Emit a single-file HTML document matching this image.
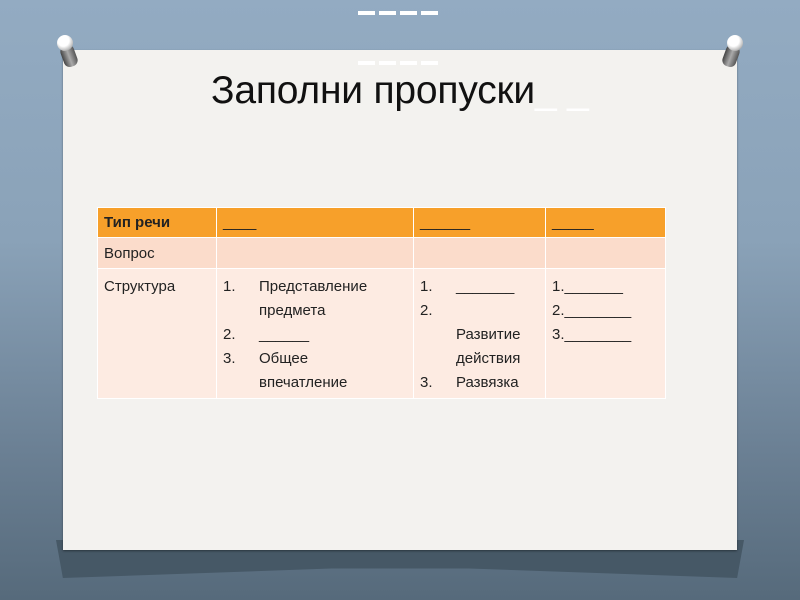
<!DOCTYPE html>
<html><head><meta charset="utf-8"><style>
body{margin:0;width:800px;height:600px;overflow:hidden;background:#6f8699;position:relative;font-family:"Liberation Sans",sans-serif;}
.bg{position:absolute;inset:0;background:linear-gradient(180deg,#93abc2 0%,#8aa2b8 40%,#6b8094 75%,#566a7b 100%);}
.shadow{position:absolute;left:56px;top:540px;width:688px;height:38px;background:#465866;clip-path:polygon(0 0,100% 0,99% 100%,60% 75%,40% 75%,1% 100%);}
.paper{position:absolute;left:63px;top:50px;width:674px;height:500px;background:#f3f2ef;box-shadow:0 1px 2px rgba(0,0,0,.4);}
.pin{position:absolute;width:16px;height:16px;border-radius:50%;background:radial-gradient(circle at 40% 35%,#fff 0 40%,#bbb 70%,#555 100%);}
.pinb{position:absolute;width:14px;height:22px;border-radius:6px;background:linear-gradient(90deg,#444,#aaa,#555);}
.d{position:absolute;width:17px;height:4px;background:#fff;}
h1{position:absolute;left:211px;top:69px;margin:0;font-weight:normal;font-size:39px;color:#111;white-space:nowrap;letter-spacing:-0.2px;}
table{position:absolute;left:97px;top:207px;border-collapse:collapse;font-size:15px;color:#222;table-layout:fixed;width:568px;}
td{border:1px solid #fff;vertical-align:top;padding:6px 6px 2px;line-height:24px;box-sizing:border-box;overflow:hidden;}
tr.h td{background:#f7a02a;height:30px;padding-top:3px}
tr.h td:first-child{font-weight:bold;}
tr.a td{background:#fbdccb;height:31px;padding-top:4px}
tr.b td{background:#fdebe2;height:130px;}
.l{display:flex}.l span:first-child{width:36px;flex:none}
</style></head><body>
<div class="bg"></div>
<div class="shadow"></div>
<div class="paper"></div>
<div class="pinb" style="left:62px;top:45px;transform:rotate(-20deg)"></div>
<div class="pin" style="left:57px;top:35px"></div>
<div class="pinb" style="left:724px;top:45px;transform:rotate(20deg)"></div>
<div class="pin" style="left:727px;top:35px"></div>
<div class="d" style="left:358px;top:11px"></div><div class="d" style="left:379px;top:11px"></div><div class="d" style="left:400px;top:11px"></div><div class="d" style="left:421px;top:11px"></div>
<div class="d" style="left:358px;top:61px"></div><div class="d" style="left:379px;top:61px"></div><div class="d" style="left:400px;top:61px"></div><div class="d" style="left:421px;top:61px"></div>
<h1>Заполни пропуски<span style="color:#fff">_ _</span></h1>
<table>
<colgroup><col style="width:119px"><col style="width:197px"><col style="width:132px"><col style="width:120px"></colgroup>
<tr class="h"><td>Тип речи</td><td>____</td><td>______</td><td>_____</td></tr>
<tr class="a"><td>Вопрос</td><td></td><td></td><td></td></tr>
<tr class="b"><td>Структура</td>
<td><div class="l"><span>1.</span><span>Представление предмета</span></div><div class="l"><span>2.</span><span>______</span></div><div class="l"><span>3.</span><span>Общее<br>впечатление</span></div></td>
<td><div class="l"><span>1.</span><span>_______</span></div><div class="l"><span>2.</span><span><br>Развитие действия</span></div><div class="l"><span>3.</span><span>Развязка</span></div></td>
<td>1._______<br>2.________<br>3.________</td></tr>
</table>
</body></html>
